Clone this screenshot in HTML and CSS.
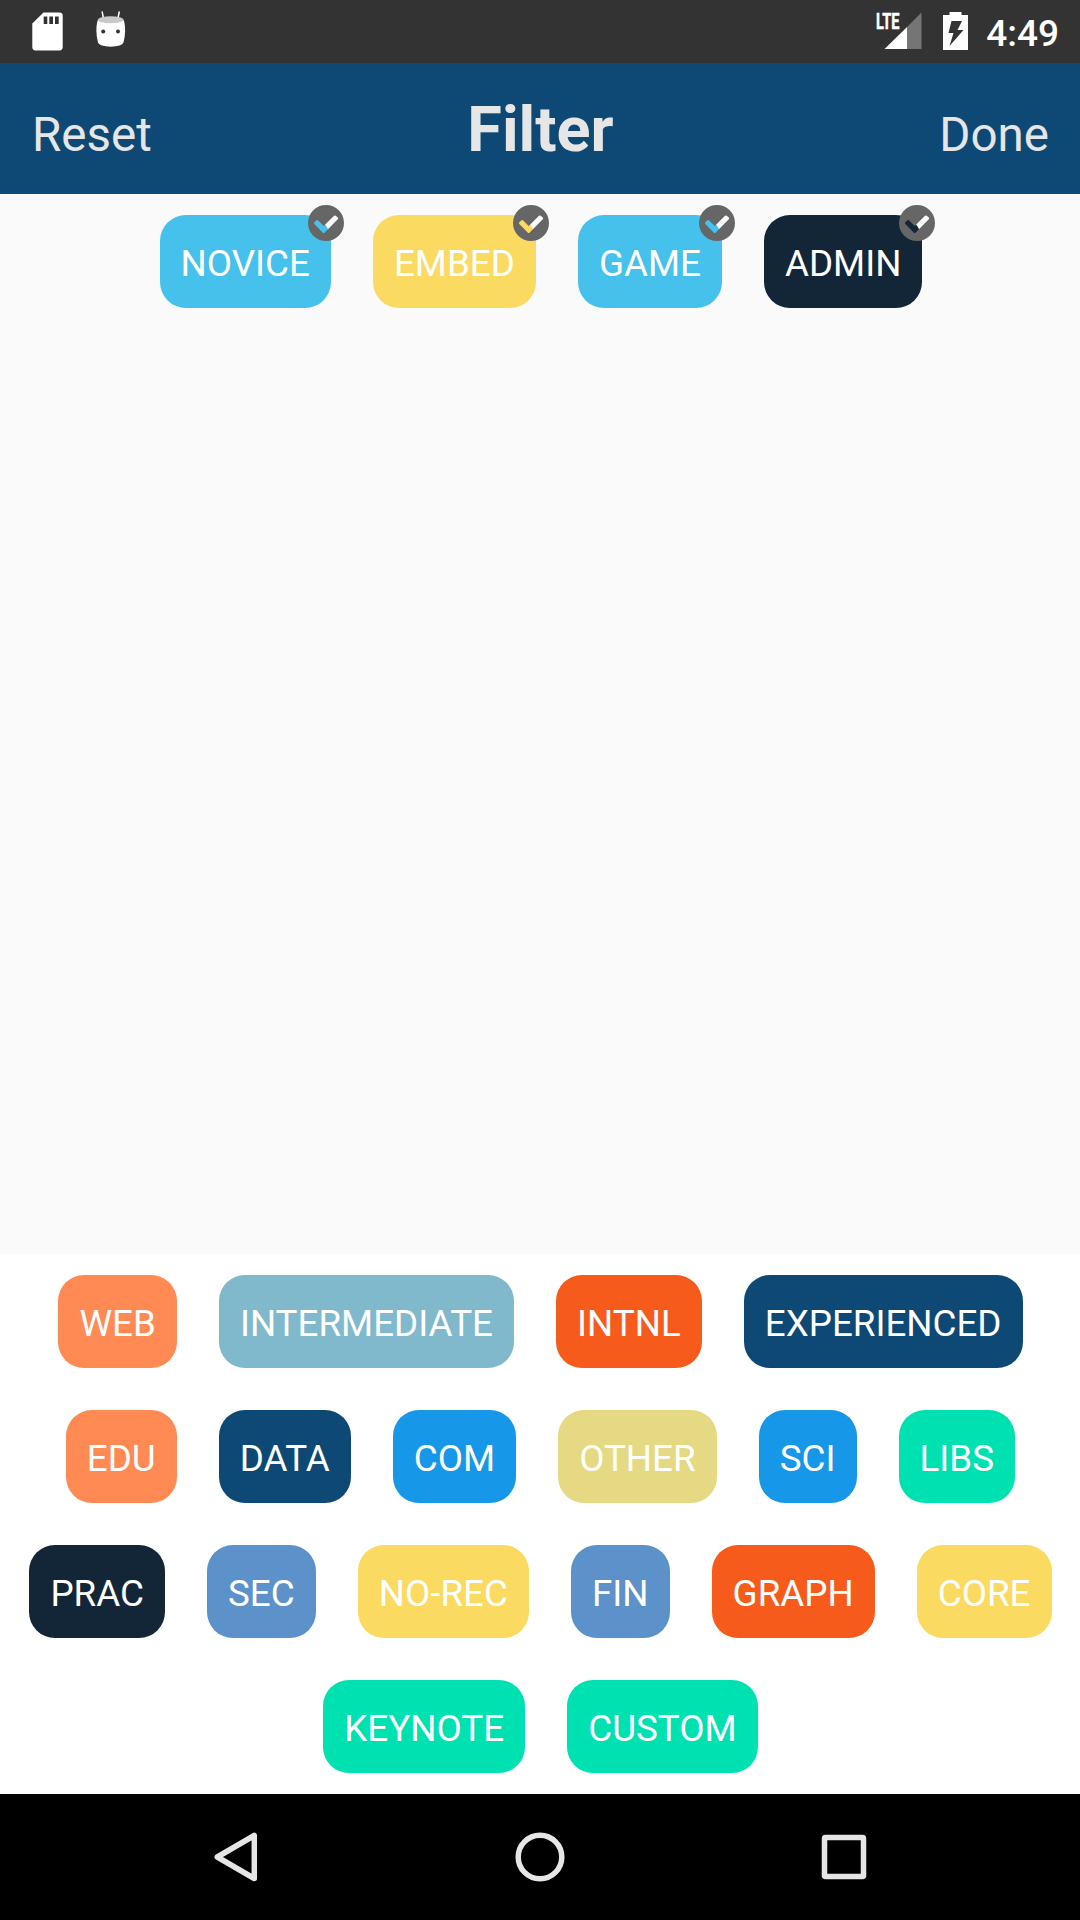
FILE: index.html
```html
<!DOCTYPE html>
<html lang="en">
<head>
<meta charset="utf-8">
<title>Filter</title>
<link rel="stylesheet" href="styles.css">
</head>
<body>
<svg class="defs" aria-hidden="true">
  <symbol id="check" viewBox="0 0 36 36">
    <path fill-rule="evenodd" d="M18 0a18 18 0 1 1 0 36a18 18 0 1 1 0-36zM30 14.1Q30.500 13.300 29.800 12.600L27.700 10.700Q26.800 10.100 26 10.800L15.700 20.900L10.200 15.400Q9.300 14.700 8.500 15.300L6.300 17.300Q5.600 18.100 6.300 18.900L14.900 27.700Q15.700 28.300 16.500 27.700z"/>
  </symbol>
</svg>
<div class="screen">
  <div class="status">
    <div class="status-group">
      <svg class="icon-sd" viewBox="0 0 31 39"><path fill="#fff" fill-rule="evenodd" d="M11.500 .5H27.500Q30.700 .5 30.700 3.700V35Q30.700 38.400 27.500 38.400H3.500Q.3 38.400 .3 35V11.500zM11.700 4.500V12H15.300V4.500zM17.300 4.500V12H21V4.500zM23 4.500V12H26.700V4.500z"/></svg>
      <svg class="icon-bot" viewBox="0 0 32 36">
        <path d="M7.200 1L8.500 7.500M24.200 1L22.900 7.500" stroke="#fff" stroke-width="1.500" stroke-linecap="round"/>
        <path fill="#fff" d="M2.500 9.500Q16 3 29 9.500Q31.500 20 28.500 31.500Q27 35.500 15.700 35.700Q4.500 35.500 3 31.500Q0 20 2.500 9.500z"/>
        <ellipse cx="15.700" cy="8.700" rx="12.800" ry="3.500" fill="#c8c8c8"/>
        <circle cx="8.200" cy="20.500" r="2" fill="#333"/><circle cx="23" cy="20.500" r="2" fill="#333"/>
      </svg>
    </div>
    <div class="status-group">
      <svg class="icon-signal" viewBox="0 0 50 50">
        <path fill="#757575" d="M49.500 12.500V49H35V27z"/>
        <path fill="#fff" d="M35 27V49H12.500z"/>
        <text class="lte" x="4" y="29" textLength="23.500" lengthAdjust="spacingAndGlyphs">LTE</text>
      </svg>
      <svg class="icon-battery" viewBox="0 0 25 38"><path fill="#fff" fill-rule="evenodd" d="M6.500 0H18.500V3H25V38H0V3H6.500zM8.500 9L5.500 21H10.500L6.500 34L20.500 18H14.500L19 9z"/></svg>
      <span class="clock">4:49</span>
    </div>
  </div>
  <header class="header">
    <span class="action">Reset</span>
    <h1 class="title">Filter</h1>
    <span class="action action-end">Done</span>
  </header>
  <main class="chips selected">
    <span class="chip sky">NOVICE<svg class="badge"><use href="#check"/></svg></span>
    <span class="chip yellow">EMBED<svg class="badge"><use href="#check"/></svg></span>
    <span class="chip sky">GAME<svg class="badge"><use href="#check"/></svg></span>
    <span class="chip ink">ADMIN<svg class="badge"><use href="#check"/></svg></span>
  </main>
  <section class="chips available">
    <span class="chip coral">WEB</span>
    <span class="chip teal">INTERMEDIATE</span>
    <span class="chip orange">INTNL</span>
    <span class="chip navy">EXPERIENCED</span>
    <span class="chip coral">EDU</span>
    <span class="chip navy">DATA</span>
    <span class="chip blue">COM</span>
    <span class="chip sand">OTHER</span>
    <span class="chip blue">SCI</span>
    <span class="chip mint">LIBS</span>
    <span class="chip ink">PRAC</span>
    <span class="chip steel">SEC</span>
    <span class="chip yellow">NO-REC</span>
    <span class="chip steel">FIN</span>
    <span class="chip orange">GRAPH</span>
    <span class="chip yellow">CORE</span>
    <span class="chip mint">KEYNOTE</span>
    <span class="chip mint">CUSTOM</span>
  </section>
  <nav class="nav">
    <svg viewBox="0 0 60 60"><path d="M48.300 8.500V51.500L11.300 30z"/></svg>
    <svg viewBox="0 0 60 60"><circle cx="30" cy="30" r="21.800"/></svg>
    <svg viewBox="0 0 60 60"><rect x="10.500" y="10.500" width="39" height="39" rx="1"/></svg>
  </nav>
</div>
</body>
</html>
```

FILE: styles.css
```css
* { box-sizing: border-box; }

body {
  margin: 0;
  font-family: Roboto, "Liberation Sans", sans-serif;
}

.defs { position: absolute; width: 0; height: 0; }

.screen {
  display: flex;
  flex-direction: column;
  width: 1080px;
  height: 1920px;
  background: #fafafa;
}

.status {
  display: flex;
  justify-content: space-between;
  height: 63px;
  padding: 0 21px 0 32px;
  background: #333;
}

.status-group { display: flex; }
.icon-sd { width: 31px; height: 39px; margin-top: 12px; }
.icon-bot { width: 32px; height: 36px; margin: 11px 0 0 32px; }
.icon-signal { width: 50px; height: 50px; }
.icon-battery { width: 25px; height: 38px; margin: 12px 18px 0 21px; }

.lte {
  font-size: 22px;
  font-weight: 700;
  fill: #fff;
  stroke: #fff;
  stroke-width: 0.5;
}

.clock {
  color: #fff;
  font-size: 37px;
  font-weight: 500;
  line-height: 67px;
}

.header {
  display: grid;
  grid-template-columns: 1fr auto 1fr;
  align-items: baseline;
  height: 131px;
  padding: 30px 31px 0 32px;
  color: #e6e6e6;
  background: #0e4975;
}

.title { margin: 0; font-size: 63px; line-height: 74px; }
.action { font-size: 47.5px; }
.action-end { text-align: right; }

.chips {
  display: flex;
  flex-wrap: wrap;
  justify-content: center;
  align-content: flex-start;
  gap: 42px;
  padding: 21px 0 21px 1px;
}

.selected { flex: 1; padding-left: 2px; }
.available { height: 540px; background: #fff; }

.chip {
  position: relative;
  height: 93px;
  padding: 3px 21.1px 0 21px;
  border-radius: 26px;
  color: #fff;
  font-size: 36.75px;
  line-height: 91px;
}

.badge {
  position: absolute;
  top: -10px;
  right: -13px;
  width: 36px;
  height: 36px;
  fill: #666;
}

.sky { background: #46c1eb; }
.yellow { background: #fada61; }
.ink { background: #132638; }
.coral { background: #ff8a54; }
.teal { background: #80b8cc; }
.orange { background: #f75b1b; }
.navy { background: #0e4975; }
.blue { background: #1797e7; }
.sand { background: #e5d983; }
.mint { background: #00e1b2; }
.steel { background: #5c91ca; }

.nav {
  display: flex;
  justify-content: center;
  align-items: center;
  gap: 244px;
  height: 126px;
  background: #000;
}

.nav svg {
  width: 60px;
  height: 60px;
  fill: none;
  stroke: #e6e6e6;
  stroke-width: 5.5;
  stroke-linejoin: round;
}
```
